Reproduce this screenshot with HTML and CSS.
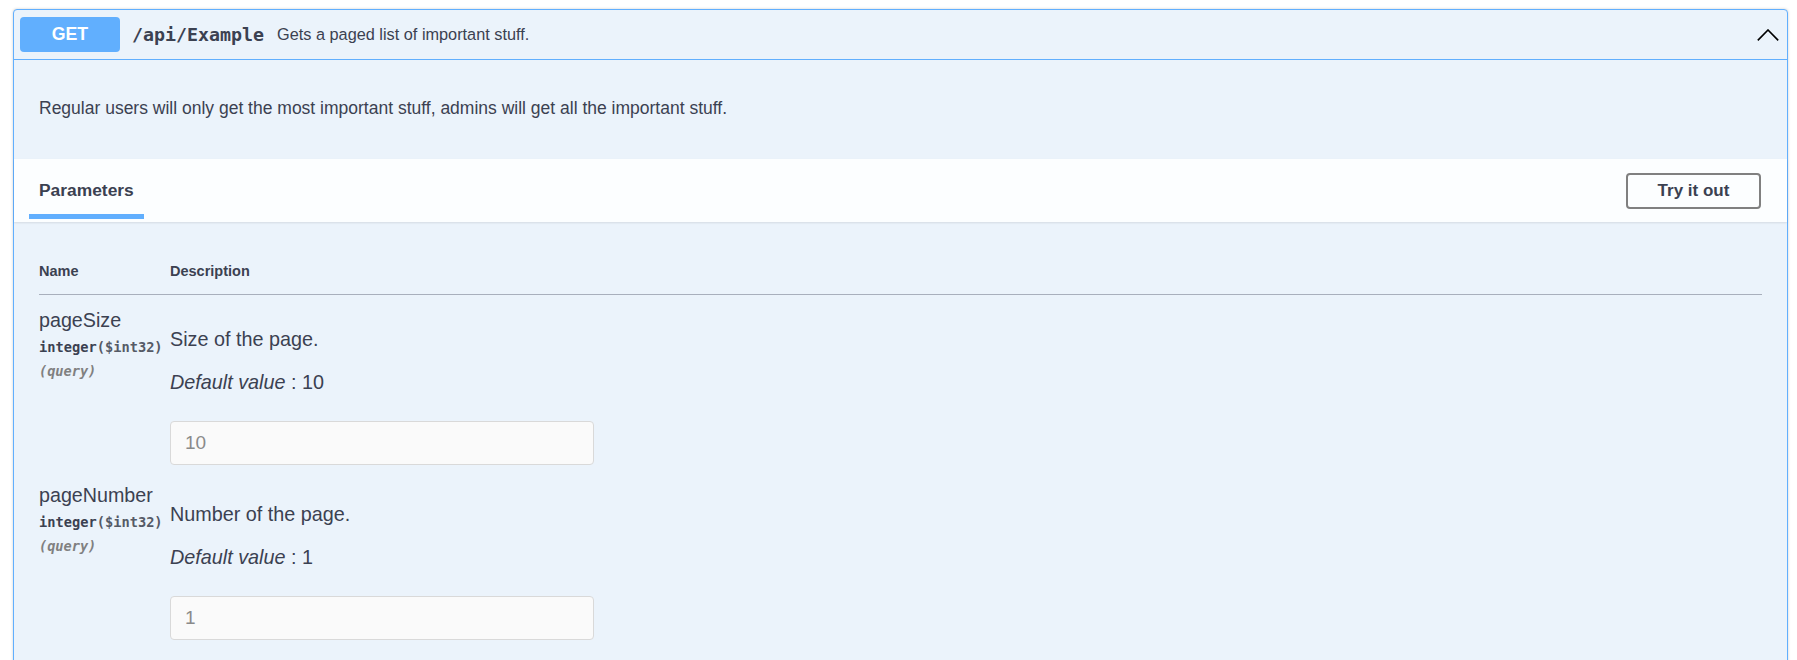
FILE: index.html
```html
<!DOCTYPE html>
<html lang="en">
<head>
    <meta charset="UTF-8">
    <meta name="viewport" content="width=device-width, initial-scale=1.0">
    <title>Swagger UI - /api/Example</title>
    <link rel="stylesheet" href="styles.css">
</head>
<body>
    <div class="opblock">
        <div class="opblock-summary">
            <span class="method">GET</span>
            <span class="path">/api/Example</span>
            <span class="summary-text">Gets a paged list of important stuff.</span>
            <svg class="arrow" width="22" height="12" viewBox="0 0 22 12">
                <polyline points="0.8,11.4 11,1 21.2,11.4" fill="none" stroke="#000" stroke-width="1.6"/>
            </svg>
        </div>
        <div class="opblock-body">
            <div class="description">
                <p>Regular users will only get the most important stuff, admins will get all the important stuff.</p>
            </div>
            <div class="section-header">
                <div class="tab-item"><h4>Parameters</h4></div>
                <button class="try-out">Try it out</button>
            </div>
            <div class="parameters">
                <div class="param-head">
                    <div class="col-name">Name</div>
                    <div class="col-desc">Description</div>
                </div>
                <div class="param-row">
                    <div class="col-name">
                        <div class="param-name">pageSize</div>
                        <div class="param-type">integer<span class="param-format">($int32)</span></div>
                        <div class="param-in">(query)</div>
                    </div>
                    <div class="col-desc">
                        <p class="param-text">Size of the page.</p>
                        <p class="param-default"><i>Default value</i> : 10</p>
                        <input type="text" class="param-input" value="10">
                    </div>
                </div>
                <div class="param-row">
                    <div class="col-name">
                        <div class="param-name">pageNumber</div>
                        <div class="param-type">integer<span class="param-format">($int32)</span></div>
                        <div class="param-in">(query)</div>
                    </div>
                    <div class="col-desc">
                        <p class="param-text">Number of the page.</p>
                        <p class="param-default"><i>Default value</i> : 1</p>
                        <input type="text" class="param-input" value="1">
                    </div>
                </div>
            </div>
        </div>
    </div>
</body>
</html>
```

FILE: styles.css
```css
body {
    margin: 0;
    height: 100vh;
    overflow: hidden;
    background: #fff;
    color: #3b4151;
    font-family: 'Liberation Sans', Arial, sans-serif;
}
.opblock {
    margin: 9px 9px 0 13px;
    background: #ebf3fb;
    border: 1px solid #61affe;
    border-radius: 4px;
    box-shadow: 0 0 3px rgba(0,0,0,0.19);
    min-height: 700px;
}
.opblock-summary {
    display: flex;
    align-items: center;
    padding: 7px 8px 7px 6px;
    border-bottom: 1px solid #61affe;
}
.method {
    width: 100px;
    height: 35px;
    line-height: 35px;
    text-align: center;
    background: #61affe;
    color: #fff;
    border-radius: 4px;
    font-size: 17.7px;
    font-weight: bold;
}
.path {
    margin-left: 12px;
    font-family: 'DejaVu Sans Mono', 'Liberation Mono', monospace;
    font-weight: bold;
    font-size: 18.3px;
    color: #3b4151;
}
.summary-text {
    flex: 1;
    margin-left: 13px;
    font-size: 16.3px;
    color: #3b4151;
}
.arrow {
    display: block;
}
.description {
    padding: 38px 25px 41px 25px;
}
.description p {
    margin: 0;
    font-size: 17.5px;
    line-height: 20px;
}
.section-header {
    display: flex;
    align-items: center;
    justify-content: space-between;
    height: 63px;
    padding: 0 26px 0 15px;
    background: rgba(255,255,255,0.85);
    box-shadow: 0 1px 2px rgba(0,0,0,0.1);
}
.tab-item {
    align-self: flex-start;
    padding: 20px 0 0 0;
}
.tab-item h4 {
    margin: 0;
    padding: 0 10px;
    font-size: 17.4px;
    line-height: 22px;
    color: #3b4151;
}
.tab-item:after {
    content: '';
    display: block;
    height: 5px;
    margin-top: 13px;
    background: #61affe;
}
.try-out {
    width: 135px;
    height: 36px;
    background: transparent;
    border: 2px solid #808080;
    border-radius: 4px;
    font-family: 'Liberation Sans', Arial, sans-serif;
    font-size: 17px;
    font-weight: bold;
    color: #3b4151;
    cursor: pointer;
}
.parameters {
    padding: 0 25px;
}
.param-head {
    display: flex;
    padding: 40px 0 14px 0;
    border-bottom: 1px solid #a8afbc;
    font-size: 14.5px;
    font-weight: bold;
    line-height: 18px;
}
.col-name {
    width: 131px;
    flex-shrink: 0;
}
.col-desc {
    flex: 1;
}
.param-row {
    display: flex;
    padding: 13px 0 5px 0;
}
.param-name {
    font-size: 19.7px;
    line-height: 24px;
}
.param-type {
    margin-top: 2px;
    font-family: 'DejaVu Sans Mono', 'Liberation Mono', monospace;
    font-size: 13.7px;
    font-weight: bold;
    line-height: 26px;
}
.param-format {
    color: #555a66;
}
.param-in {
    font-family: 'DejaVu Sans Mono', 'Liberation Mono', monospace;
    font-size: 13.6px;
    font-style: italic;
    font-weight: 600;
    line-height: 22px;
    color: #808080;
}
.param-row .col-desc {
    padding-top: 19px;
}
.param-text, .param-default {
    margin: 0 0 19px 0;
    font-size: 19.8px;
    line-height: 24px;
}
.param-default {
    margin-bottom: 27px;
}
.param-input {
    display: block;
    box-sizing: border-box;
    width: 424px;
    height: 44px;
    margin: 0;
    padding: 0 14px;
    background: #fafafa;
    border: 1px solid #d9d9d9;
    border-radius: 4px;
    font-family: 'Liberation Sans', Arial, sans-serif;
    font-size: 19px;
    color: #8a8a8a;
}
```
